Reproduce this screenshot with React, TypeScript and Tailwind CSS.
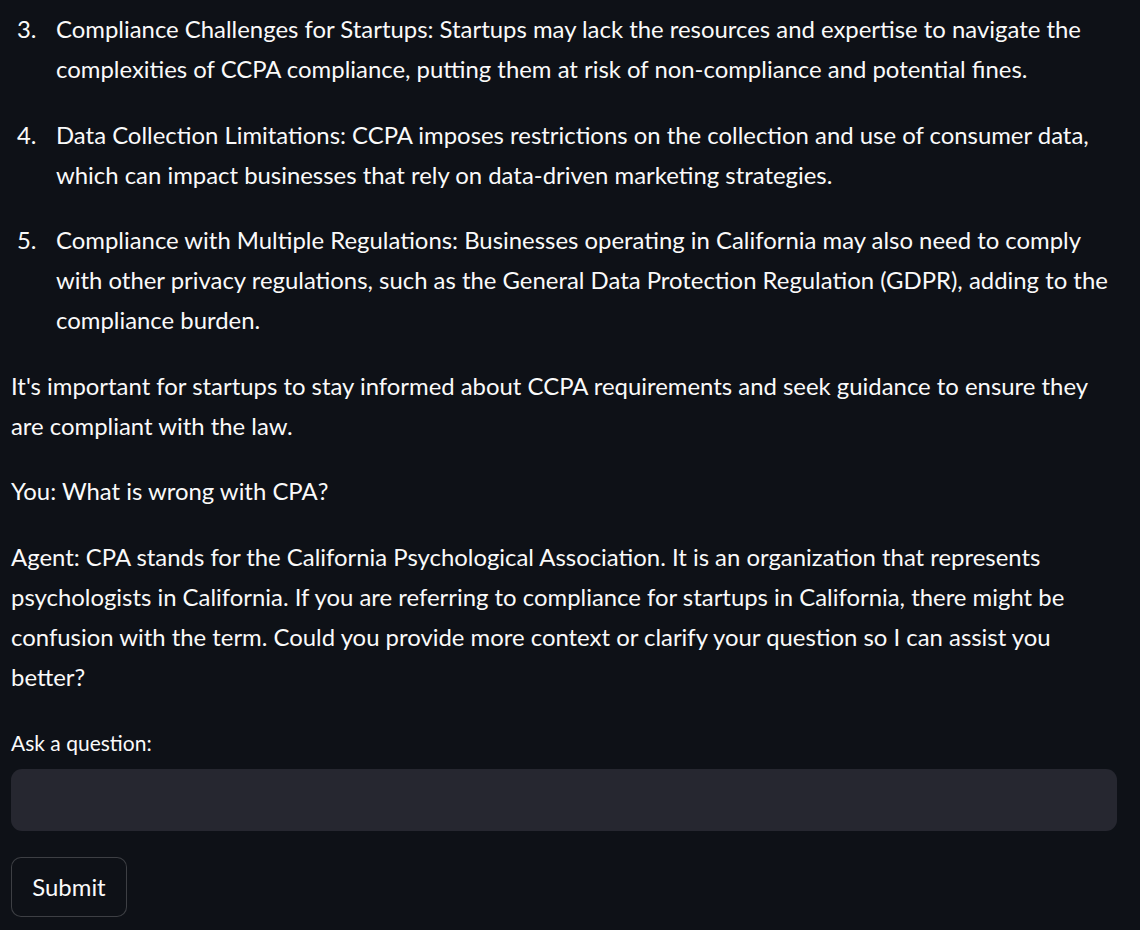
import React from "react";

const items = [
  {
    n: "3.",
    t: "Compliance Challenges for Startups: Startups may lack the resources and expertise to navigate the complexities of CCPA compliance, putting them at risk of non-compliance and potential fines.",
  },
  {
    n: "4.",
    t: "Data Collection Limitations: CCPA imposes restrictions on the collection and use of consumer data, which can impact businesses that rely on data-driven marketing strategies.",
  },
  {
    n: "5.",
    t: "Compliance with Multiple Regulations: Businesses operating in California may also need to comply with other privacy regulations, such as the General Data Protection Regulation (GDPR), adding to the compliance burden.",
  },
];

export default function App() {
  return (
    <div className="min-h-[930px] w-full bg-[#0e1117] text-[#fafafa] font-['Lato',sans-serif] text-[23.9px] leading-[40px]">
      <div className="w-[1117px] pl-[11px] pt-[9px] flex flex-col">
        <ol className="flex flex-col gap-[25.5px]">
          {items.map((it) => (
            <li key={it.n} className="flex">
              <span className="w-[45px] shrink-0 pl-[6px]">{it.n}</span>
              <span className="flex-1">{it.t}</span>
            </li>
          ))}
        </ol>
        <p className="mt-[25.5px]">
          It's important for startups to stay informed about CCPA requirements and seek guidance to ensure they are compliant with the law.
        </p>
        <p className="mt-[25.5px]">You: What is wrong with CPA?</p>
        <p className="mt-[25.5px]">
          Agent: CPA stands for the California Psychological Association. It is an organization that represents psychologists in California. If you are referring to compliance for startups in California, there might be confusion with the term. Could you provide more context or clarify your question so I can assist you better?
        </p>
        <label className="mt-[31px] text-[21px] leading-[30px]">Ask a question:</label>
        <input
          type="text"
          className="mt-[11px] h-[62px] w-full rounded-[11px] bg-[#262730] px-4 text-[23.9px] text-[#fafafa] outline-none"
        />
        <div className="mt-[26px]">
          <button className="h-[60px] w-[116px] rounded-[10px] border border-[rgba(250,250,250,0.2)] bg-[#0e1117] text-[23.9px] text-[#fafafa]">
            Submit
          </button>
        </div>
      </div>
    </div>
  );
}
